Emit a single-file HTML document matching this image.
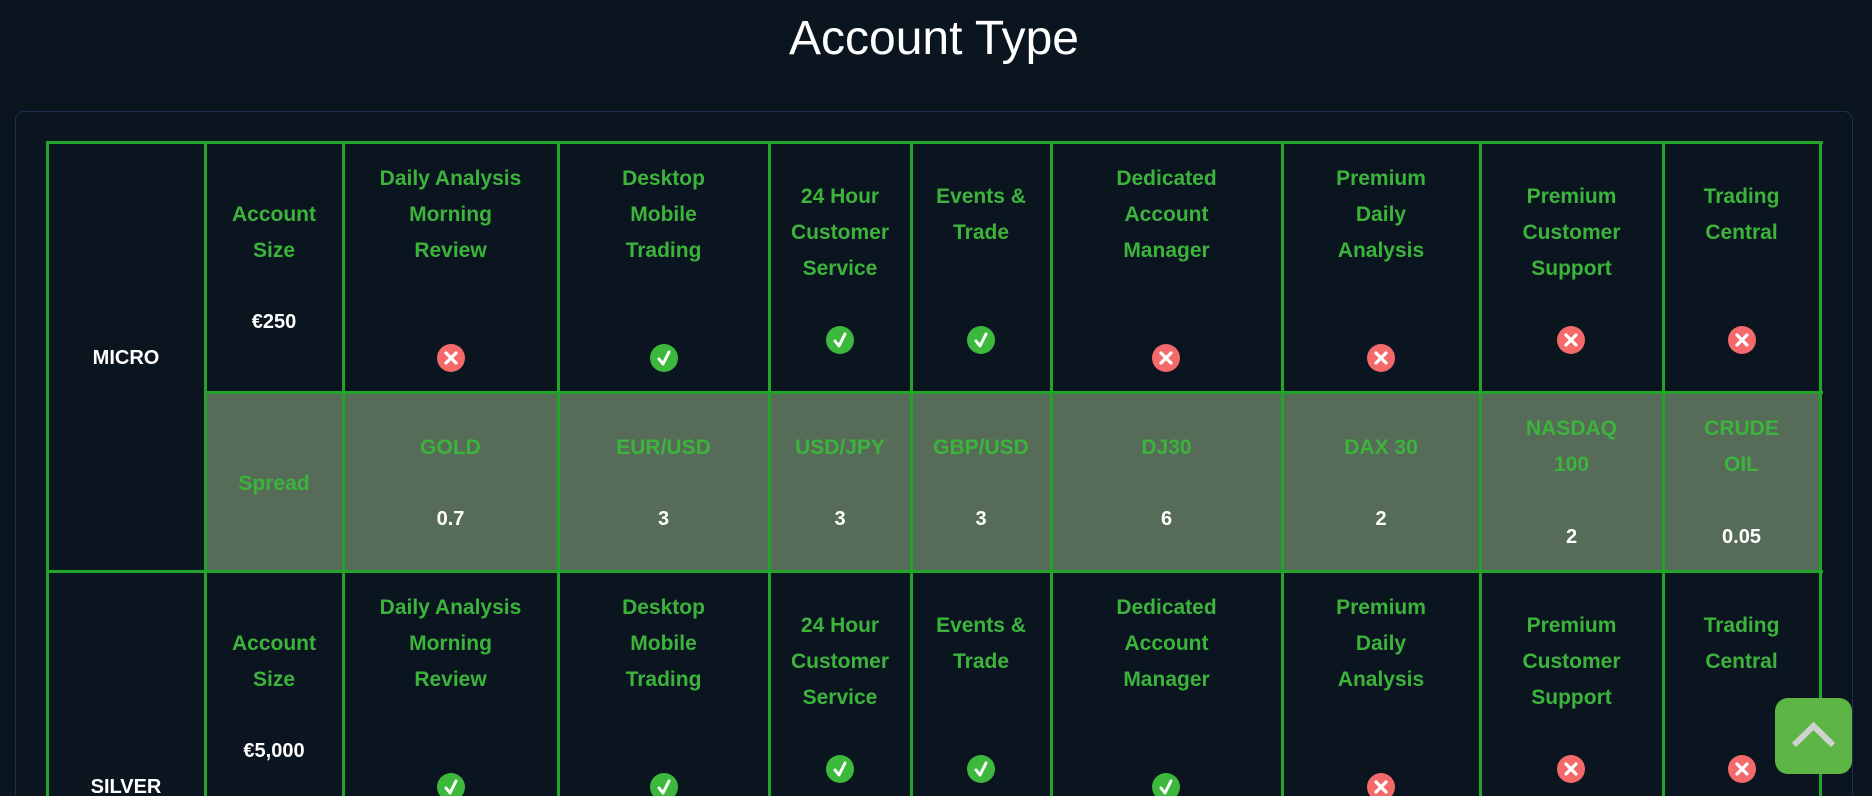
<!DOCTYPE html>
<html><head><meta charset="utf-8"><style>
html,body{margin:0;width:1872px;height:796px;overflow:hidden}
body{background:#0b151f;font-family:"Liberation Sans",sans-serif}
#w{position:relative;width:1872px;height:796px;overflow:hidden}
h1{position:absolute;left:0;width:1868px;top:10px;margin:0;text-align:center;color:#fff;font-weight:400;font-size:48px;line-height:58px}
.card{position:absolute;left:15px;top:111px;width:1836px;height:760px;border:1px solid #1c3150;border-radius:9px}
.hl{position:absolute;background:#22a32a;height:3px}
.vl{position:absolute;background:#22a32a;width:3px}
.sp{position:absolute;left:205px;top:392px;width:1615px;height:179px;background:#566b58}
.t{position:absolute;text-align:center;line-height:36px;font-weight:bold;font-size:21px;color:#3cb43c}
.w{color:#fff;font-size:20px}
.i{position:absolute;width:28px;height:28px;border-radius:50%}
.i svg{display:block}
.ok{background:#3cb93c}.no{background:#f46a6a}
.top{position:absolute;left:1775px;top:698px;width:77px;height:76px;background:#5cb544;border-radius:13px}
</style></head><body><div id="w">
<h1>Account Type</h1>
<div class="card"></div>
<div class="sp"></div>
<div class="hl" style="left:47px;top:141px;width:1776px"></div>
<div class="hl" style="left:205px;top:391px;width:1618px"></div>
<div class="hl" style="left:47px;top:570px;width:1776px"></div>
<div class="vl" style="left:46px;top:141px;height:700px"></div>
<div class="vl" style="left:204px;top:141px;height:700px"></div>
<div class="vl" style="left:342px;top:141px;height:700px"></div>
<div class="vl" style="left:557px;top:141px;height:700px"></div>
<div class="vl" style="left:768px;top:141px;height:700px"></div>
<div class="vl" style="left:910px;top:141px;height:700px"></div>
<div class="vl" style="left:1050px;top:141px;height:700px"></div>
<div class="vl" style="left:1281px;top:141px;height:700px"></div>
<div class="vl" style="left:1479px;top:141px;height:700px"></div>
<div class="vl" style="left:1662px;top:141px;height:700px"></div>
<div class="vl" style="left:1819px;top:141px;height:700px"></div>

<div class="t w" style="left:47px;width:158px;top:340px">MICRO</div>
<div class="t" style="left:205px;width:138px;top:197px">Account<br>Size</div>
<div class="t w" style="left:205px;width:138px;top:304px">€250</div>
<div class="t" style="left:343px;width:215px;top:161px">Daily Analysis<br>Morning<br>Review</div>
<div class="t" style="left:558px;width:211px;top:161px">Desktop<br>Mobile<br>Trading</div>
<div class="t" style="left:769px;width:142px;top:179px">24 Hour<br>Customer<br>Service</div>
<div class="t" style="left:911px;width:140px;top:179px">Events &amp;<br>Trade</div>
<div class="t" style="left:1051px;width:231px;top:161px">Dedicated<br>Account<br>Manager</div>
<div class="t" style="left:1282px;width:198px;top:161px">Premium<br>Daily<br>Analysis</div>
<div class="t" style="left:1480px;width:183px;top:179px">Premium<br>Customer<br>Support</div>
<div class="t" style="left:1663px;width:157px;top:179px">Trading<br>Central</div>

<div class="t" style="left:205px;width:138px;top:466px">Spread</div>
<div class="t" style="left:343px;width:215px;top:430px">GOLD</div>
<div class="t w" style="left:343px;width:215px;top:501px">0.7</div>
<div class="t" style="left:558px;width:211px;top:430px">EUR/USD</div>
<div class="t w" style="left:558px;width:211px;top:501px">3</div>
<div class="t" style="left:769px;width:142px;top:430px">USD/JPY</div>
<div class="t w" style="left:769px;width:142px;top:501px">3</div>
<div class="t" style="left:911px;width:140px;top:430px">GBP/USD</div>
<div class="t w" style="left:911px;width:140px;top:501px">3</div>
<div class="t" style="left:1051px;width:231px;top:430px">DJ30</div>
<div class="t w" style="left:1051px;width:231px;top:501px">6</div>
<div class="t" style="left:1282px;width:198px;top:430px">DAX 30</div>
<div class="t w" style="left:1282px;width:198px;top:501px">2</div>
<div class="t" style="left:1480px;width:183px;top:411px">NASDAQ<br>100</div>
<div class="t w" style="left:1480px;width:183px;top:519px">2</div>
<div class="t" style="left:1663px;width:157px;top:411px">CRUDE<br>OIL</div>
<div class="t w" style="left:1663px;width:157px;top:519px">0.05</div>

<div class="t w" style="left:47px;width:158px;top:769px">SILVER</div>
<div class="t" style="left:205px;width:138px;top:626px">Account<br>Size</div>
<div class="t w" style="left:205px;width:138px;top:733px">€5,000</div>
<div class="t" style="left:343px;width:215px;top:590px">Daily Analysis<br>Morning<br>Review</div>
<div class="t" style="left:558px;width:211px;top:590px">Desktop<br>Mobile<br>Trading</div>
<div class="t" style="left:769px;width:142px;top:608px">24 Hour<br>Customer<br>Service</div>
<div class="t" style="left:911px;width:140px;top:608px">Events &amp;<br>Trade</div>
<div class="t" style="left:1051px;width:231px;top:590px">Dedicated<br>Account<br>Manager</div>
<div class="t" style="left:1282px;width:198px;top:590px">Premium<br>Daily<br>Analysis</div>
<div class="t" style="left:1480px;width:183px;top:608px">Premium<br>Customer<br>Support</div>
<div class="t" style="left:1663px;width:157px;top:608px">Trading<br>Central</div>

<div class="i no" style="left:437px;top:344px"><svg width="28" height="28"><path d="M9 9L19 19M19 9L9 19" stroke="#fff" stroke-width="3.2" stroke-linecap="round"/></svg></div>
<div class="i ok" style="left:650px;top:344px"><svg width="28" height="28"><path d="M9 15L13 20L19 8" stroke="#fff" stroke-width="3" fill="none" stroke-linecap="round" stroke-linejoin="round"/></svg></div>
<div class="i ok" style="left:826px;top:326px"><svg width="28" height="28"><path d="M9 15L13 20L19 8" stroke="#fff" stroke-width="3" fill="none" stroke-linecap="round" stroke-linejoin="round"/></svg></div>
<div class="i ok" style="left:967px;top:326px"><svg width="28" height="28"><path d="M9 15L13 20L19 8" stroke="#fff" stroke-width="3" fill="none" stroke-linecap="round" stroke-linejoin="round"/></svg></div>
<div class="i no" style="left:1152px;top:344px"><svg width="28" height="28"><path d="M9 9L19 19M19 9L9 19" stroke="#fff" stroke-width="3.2" stroke-linecap="round"/></svg></div>
<div class="i no" style="left:1367px;top:344px"><svg width="28" height="28"><path d="M9 9L19 19M19 9L9 19" stroke="#fff" stroke-width="3.2" stroke-linecap="round"/></svg></div>
<div class="i no" style="left:1557px;top:326px"><svg width="28" height="28"><path d="M9 9L19 19M19 9L9 19" stroke="#fff" stroke-width="3.2" stroke-linecap="round"/></svg></div>
<div class="i no" style="left:1728px;top:326px"><svg width="28" height="28"><path d="M9 9L19 19M19 9L9 19" stroke="#fff" stroke-width="3.2" stroke-linecap="round"/></svg></div>

<div class="i ok" style="left:437px;top:773px"><svg width="28" height="28"><path d="M9 15L13 20L19 8" stroke="#fff" stroke-width="3" fill="none" stroke-linecap="round" stroke-linejoin="round"/></svg></div>
<div class="i ok" style="left:650px;top:773px"><svg width="28" height="28"><path d="M9 15L13 20L19 8" stroke="#fff" stroke-width="3" fill="none" stroke-linecap="round" stroke-linejoin="round"/></svg></div>
<div class="i ok" style="left:826px;top:755px"><svg width="28" height="28"><path d="M9 15L13 20L19 8" stroke="#fff" stroke-width="3" fill="none" stroke-linecap="round" stroke-linejoin="round"/></svg></div>
<div class="i ok" style="left:967px;top:755px"><svg width="28" height="28"><path d="M9 15L13 20L19 8" stroke="#fff" stroke-width="3" fill="none" stroke-linecap="round" stroke-linejoin="round"/></svg></div>
<div class="i ok" style="left:1152px;top:773px"><svg width="28" height="28"><path d="M9 15L13 20L19 8" stroke="#fff" stroke-width="3" fill="none" stroke-linecap="round" stroke-linejoin="round"/></svg></div>
<div class="i no" style="left:1367px;top:773px"><svg width="28" height="28"><path d="M9 9L19 19M19 9L9 19" stroke="#fff" stroke-width="3.2" stroke-linecap="round"/></svg></div>
<div class="i no" style="left:1557px;top:755px"><svg width="28" height="28"><path d="M9 9L19 19M19 9L9 19" stroke="#fff" stroke-width="3.2" stroke-linecap="round"/></svg></div>
<div class="i no" style="left:1728px;top:755px"><svg width="28" height="28"><path d="M9 9L19 19M19 9L9 19" stroke="#fff" stroke-width="3.2" stroke-linecap="round"/></svg></div>

<div class="top"><svg width="77" height="76"><path d="M19 47L38.5 28L58 47" stroke="#cfd3cf" stroke-width="6" fill="none"/></svg></div>
</div></body></html>
